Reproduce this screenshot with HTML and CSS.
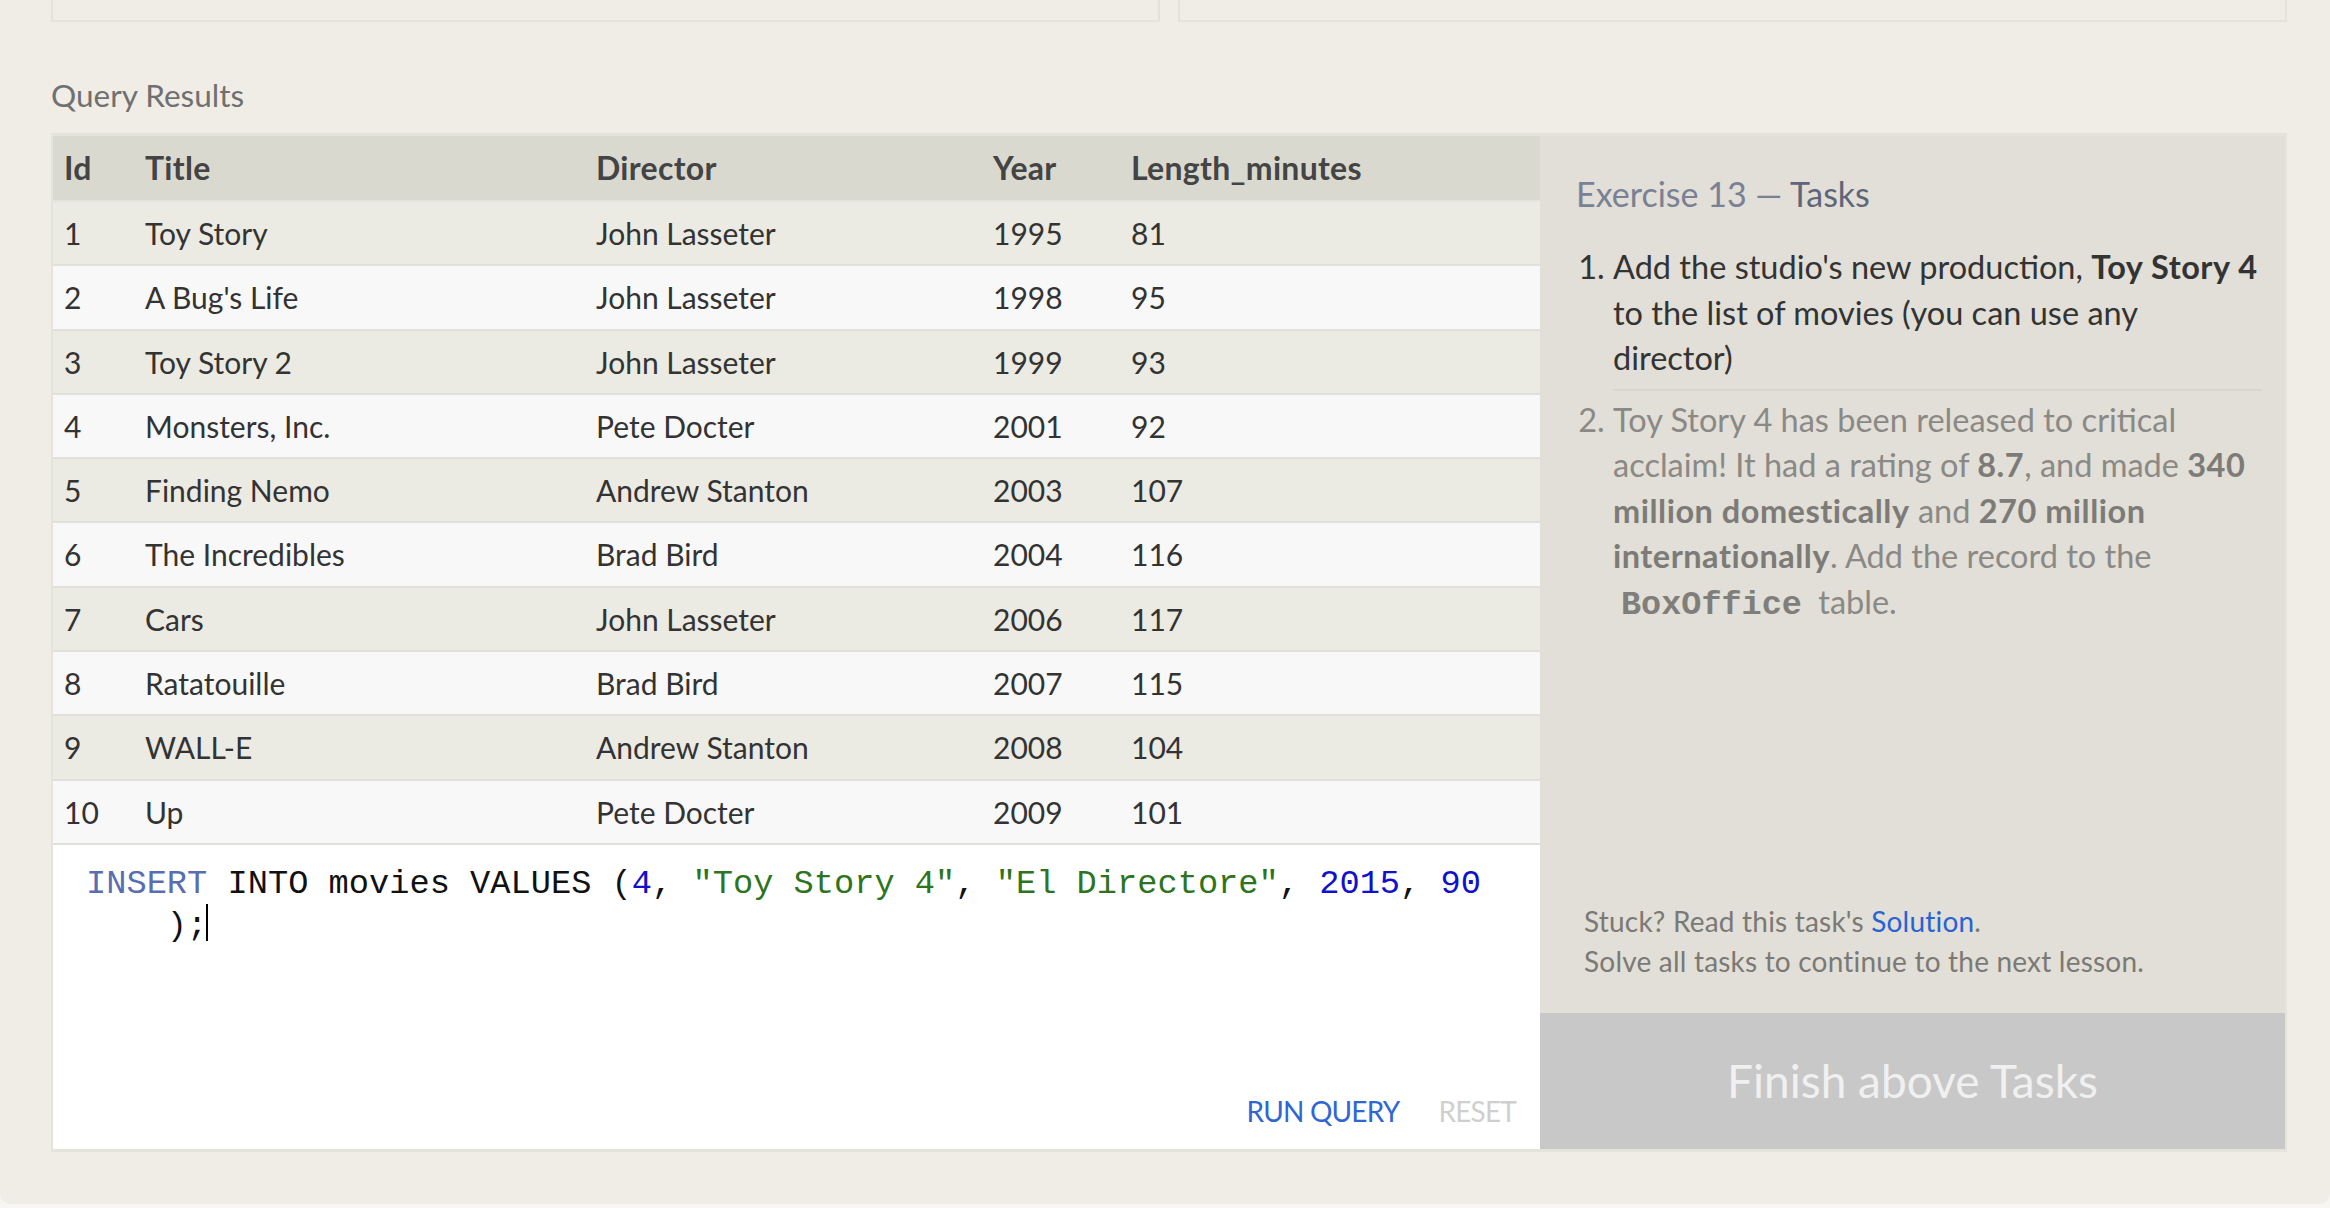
FILE: index.html
```html
<!DOCTYPE html>
<html>
<head>
<meta charset="utf-8">
<link rel="stylesheet" href="styles.css">
</head>
<body>
<div class="page">
  <div class="top-boxes">
    <div class="box"></div>
    <div class="box"></div>
  </div>
  <h2 class="results-title">Query Results</h2>
  <div class="exercise">
    <div class="main">
      <table class="results">
        <colgroup>
          <col class="c-id"><col class="c-title"><col class="c-dir"><col class="c-year"><col class="c-len">
        </colgroup>
        <thead>
          <tr><th>Id</th><th>Title</th><th>Director</th><th>Year</th><th>Length_minutes</th></tr>
        </thead>
        <tbody>
          <tr><td>1</td><td>Toy Story</td><td>John Lasseter</td><td>1995</td><td>81</td></tr>
          <tr><td>2</td><td>A Bug's Life</td><td>John Lasseter</td><td>1998</td><td>95</td></tr>
          <tr><td>3</td><td>Toy Story 2</td><td>John Lasseter</td><td>1999</td><td>93</td></tr>
          <tr><td>4</td><td>Monsters, Inc.</td><td>Pete Docter</td><td>2001</td><td>92</td></tr>
          <tr><td>5</td><td>Finding Nemo</td><td>Andrew Stanton</td><td>2003</td><td>107</td></tr>
          <tr><td>6</td><td>The Incredibles</td><td>Brad Bird</td><td>2004</td><td>116</td></tr>
          <tr><td>7</td><td>Cars</td><td>John Lasseter</td><td>2006</td><td>117</td></tr>
          <tr><td>8</td><td>Ratatouille</td><td>Brad Bird</td><td>2007</td><td>115</td></tr>
          <tr><td>9</td><td>WALL-E</td><td>Andrew Stanton</td><td>2008</td><td>104</td></tr>
          <tr><td>10</td><td>Up</td><td>Pete Docter</td><td>2009</td><td>101</td></tr>
        </tbody>
      </table>
      <div class="editor">
<pre class="code"><span class="kw">INSERT</span> INTO movies VALUES (<span class="num">4</span>, <span class="str">"Toy Story 4"</span>, <span class="str">"El Directore"</span>, <span class="num">2015</span>, <span class="num">90</span>
    );<span class="cursor"></span></pre>
        <div class="actions">
          <a class="run">RUN QUERY</a>
          <a class="reset">RESET</a>
        </div>
      </div>
    </div>
    <aside class="tasks">
      <div class="tasks-body">
        <h3 class="tasks-title"><span class="ex">Exercise 13 —</span> <span class="tk">Tasks</span></h3>
        <ol class="task-list">
          <li class="active">Add the studio's new production, <strong>Toy Story 4</strong> to the list of movies (you can use any director)</li>
          <li class="pending">Toy Story 4 has been released to critical acclaim! It had a rating of <strong>8.7</strong>, and made <strong>340 million domestically</strong> and <strong>270 million internationally</strong>. Add the record to the <code>BoxOffice</code> table.</li>
        </ol>
      </div>
      <div class="hints">
        <div>Stuck? Read this task's <a class="solution">Solution</a>.</div>
        <div>Solve all tasks to continue to the next lesson.</div>
      </div>
      <div class="finish">Finish above Tasks</div>
    </aside>
  </div>
</div>
</body>
</html>
```

FILE: styles.css
```css
* { box-sizing: border-box; }
html, body { margin: 0; padding: 0; }
body {
  background: #f7f6f2;
  font-family: "Lato", "Open Sans", sans-serif;
  width: 2330px;
  height: 1208px;
  overflow: hidden;
}
.page {
  background: #efede6;
  height: 1204px;
  padding-left: 51px;
  border-bottom-left-radius: 10px;
  border-bottom-right-radius: 10px;
}
.top-boxes {
  display: flex;
  gap: 18px;
  height: 22px;
}
.box {
  width: 1109px;
  border: 2px solid #e4e2da;
  border-top: none;
}
.results-title {
  margin: 55px 0 0;
  font-size: 31.5px;
  line-height: 36px;
  font-weight: normal;
  color: #707070;
}
.exercise {
  margin-top: 20px;
  width: 2236px;
  display: flex;
  border: 2px solid #e4e3dc;
  border-top-width: 3px;
  border-bottom-width: 3px;
}
.main {
  width: 1487px;
  display: flex;
  flex-direction: column;
}
.results {
  width: 100%;
  table-layout: fixed;
  border-collapse: separate;
  border-spacing: 0;
  font-size: 30px;
}
.c-id { width: 81px; }
.c-title { width: 451px; }
.c-dir { width: 397px; }
.c-year { width: 138px; }
.results th {
  text-align: left;
  background: #dad9d0;
  color: #444;
  font-size: 32px;
  font-weight: bold;
  line-height: 64px;
  padding: 0 0 0 11px;
  border-bottom: 2px solid #e3e2dc;
  letter-spacing: 0.3px;
}
.results td {
  line-height: 62.3px;
  padding: 0 0 0 11px;
  color: #333;
  border-bottom: 2px solid #e1e0da;
  white-space: nowrap;
}
.results tbody tr:nth-child(odd) td { background: #ebeae3; }
.results tbody tr:nth-child(even) td { background: #f8f8f8; }
.editor {
  height: 304px;
  background: #fff;
  display: flex;
  flex-direction: column;
}
.code {
  margin: 0;
  padding: 19px 0 0 33px;
  font-family: "Courier New", "Liberation Mono", monospace;
  font-size: 33.7px;
  line-height: 40px;
  color: #111;
}
.kw { color: #586eb0; }
.num { color: #1111cc; }
.str { color: #2e7420; }
.cursor {
  display: inline-block;
  width: 2px;
  height: 37px;
  background: #000;
  vertical-align: -6px;
  margin-left: -1px;
}
.actions {
  margin-top: auto;
  display: flex;
  justify-content: flex-end;
  gap: 39px;
  padding: 0 24px 18px 0;
  font-size: 28px;
  letter-spacing: -0.8px;
  line-height: 40px;
}
.run { color: #2f66d3; }
.reset { color: #cfcfcf; }
.tasks {
  width: 745px;
  background: #e1dfd7;
  display: flex;
  flex-direction: column;
}
.tasks-body {
  padding: 38px 23px 0 36px;
}
.tasks-title {
  margin: 0;
  font-size: 34px;
  line-height: 40px;
  font-weight: normal;
}
.tasks-title .ex { color: #7a8194; }
.tasks-title .tk { color: #5f6679; }
.task-list {
  margin: 24px 0 0;
  padding: 0 0 0 37px;
  font-size: 32.5px;
  line-height: 45.5px;
}
.task-list li {
  padding: 6px 0 8px;
}
.task-list li + li {
  border-top: 2px solid #d8d6cd;
}
.task-list strong { letter-spacing: 0.5px; }
.task-list .active { color: #333; }
.task-list .pending { color: #8b8985; }
.task-list .pending strong { color: #7d7b77; }
.task-list code {
  font-family: "Courier New", "Liberation Mono", monospace;
  font-weight: bold;
  font-size: 33.5px;
  padding: 0 8px;
  color: #807e7a;
}
.hints {
  margin-top: auto;
  padding: 0 0 32px 44px;
  font-size: 28px;
  letter-spacing: 0.2px;
  line-height: 40px;
  color: #7b7975;
}
.solution { color: #2a63d1; }
.finish {
  height: 136px;
  background: #c8c8c8;
  color: #f0f0f0;
  font-size: 46px;
  line-height: 136px;
  text-align: center;
}
```
